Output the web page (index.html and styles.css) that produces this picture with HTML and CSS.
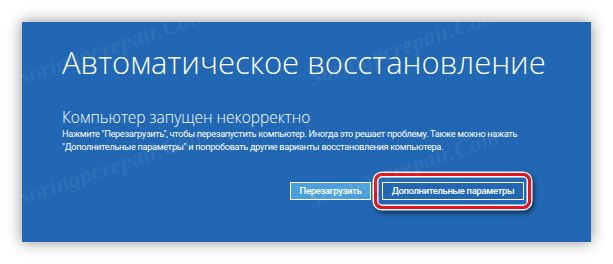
FILE: index.html
```html
<!DOCTYPE html>
<html lang="ru">
<head>
<meta charset="utf-8">
<title>Автоматическое восстановление</title>
<link rel="stylesheet" href="styles.css">
</head>
<body>
<div class="panel">
  <h1 class="title">Автоматическое восстановление</h1>
  <h2 class="subtitle">Компьютер запущен некорректно</h2>
  <p class="desc"><span class="line">Нажмите "Перезагрузить", чтобы перезапустить компьютер. Иногда это решает проблему. Также можно нажать</span><span class="line">"Дополнительные параметры" и попробовать другие варианты восстановления компьютера.</span></p>
  <div class="actions">
    <button class="btn btn-restart">Перезагрузить</button>
    <button class="btn btn-advanced">Дополнительные параметры</button>
  </div>
  <span class="wm wm1">Soringpcrepair.Com</span>
  <span class="wm wm2">Soringpcrepair.Com</span>
  <span class="wm wm3">Soringpcrepair.Com</span>
  <span class="wm wm4">Soringpcrepair.Com</span>
</div>
</body>
</html>
```
FILE: styles.css
```css
html, body {
  margin: 0;
  padding: 0;
  background: #ffffff;
}
body {
  width: 613px;
  height: 264px;
  overflow: hidden;
  font-family: "Open Sans", "Noto Sans", sans-serif;
}
.panel {
  position: relative;
  margin: 22px 0 0 22px;
  width: 569px;
  height: 220px;
  box-sizing: border-box;
  padding: 19px 0 0 40px;
  background: #2167b3;
  color: #ffffff;
  box-shadow: 0 0 14px rgba(0, 0, 0, 0.45);
}
.title {
  margin: 0;
  font-weight: 300;
  font-size: 31px;
  line-height: 42px;
}
.subtitle {
  margin: 24px 0 0 0;
  font-weight: 300;
  font-size: 15.5px;
  line-height: 20px;
}
.desc {
  margin: 1px 0 0 0;
  font-family: Roboto, "Liberation Sans", sans-serif;
  font-size: 9.2px;
  letter-spacing: -0.3px;
  line-height: 12.5px;
  font-weight: 400;
}
.line {
  display: block;
  white-space: nowrap;
}
.actions {
  display: flex;
  justify-content: flex-end;
  gap: 11px;
  margin: 29px 67px 0 0;
}
.btn {
  position: relative;
  height: 18px;
  box-sizing: border-box;
  border: 1px solid #ffffff;
  color: #ffffff;
  font-family: Roboto, "Liberation Sans", sans-serif;
  font-size: 9.5px;
  letter-spacing: -0.35px;
  font-weight: 500;
  line-height: 16px;
  padding: 0;
  margin: 0;
  white-space: nowrap;
}
.btn-restart {
  width: 81px;
  background: #4aa0dc;
}
.btn-advanced {
  width: 142px;
  background: #2167b3;
}
.btn-advanced::after {
  content: "";
  position: absolute;
  left: -9px;
  right: -8px;
  top: -10px;
  bottom: -10px;
  border: 3px solid #e8141c;
  border-radius: 8px;
  box-shadow: 0 0 0 1.5px #ffffff, inset 0 0 0 1.5px #ffffff, 2px 3px 5px 1px rgba(0, 0, 0, 0.55);
}
.wm {
  position: absolute;
  font-family: "Liberation Serif", serif;
  font-style: italic;
  font-weight: bold;
  font-size: 24px;
  line-height: 27px;
  color: rgba(255, 255, 255, 0.07);
  transform: rotate(-19deg);
  transform-origin: left bottom;
  white-space: nowrap;
  pointer-events: none;
}
.wm1 { left: -1px; top: 43px; }
.wm2 { left: 291px; top: 43px; }
.wm3 { left: -1px; top: 163px; }
.wm4 { left: 291px; top: 165px; }
```
